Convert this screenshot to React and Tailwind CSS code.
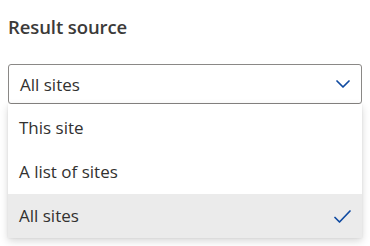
import React from 'react';

const options = ['This site', 'A list of sites', 'All sites'];

const Chevron = () => (
    <svg width="14" height="8" viewBox="0 0 14 8" fill="none">
        <path d="M1 1l6 6 6-6" stroke="#0f4aa1" strokeWidth="1.7" strokeLinecap="round" strokeLinejoin="round" />
    </svg>
);

const Check = () => (
    <svg width="17" height="13" viewBox="0 0 17 13" fill="none">
        <path d="M1 7.5l4.5 4.5L16 1" stroke="#0f4aa1" strokeWidth="1.7" strokeLinecap="round" strokeLinejoin="round" />
    </svg>
);

const App = () => {
    const selected = 'All sites';

    return (
        <div className="w-[370px] h-[246px] bg-white overflow-hidden text-[#323130]" style={{ fontFamily: '"Open Sans", "Noto Sans", sans-serif' }}>
            <div className="px-2 pt-[13px]">
                <h2 className="text-[18.5px] font-semibold leading-[27px] tracking-[-0.1px] text-[#3b3a39]">Result source</h2>

                <div className="mt-[24px] w-[354px] h-[40px] border border-[#8a8886] rounded-[3px] flex items-center justify-between pl-[11px] pr-[11px]">
                    <span className="text-[17px] leading-none">{selected}</span>
                    <Chevron />
                </div>

                <div className="w-[354px] pt-[2px] bg-white shadow-[0_3px_8px_rgba(0,0,0,0.16),0_0_2px_rgba(0,0,0,0.08)]">
                    {options.map((opt) => (
                        <div
                            key={opt}
                            className={`h-[44px] flex items-center justify-between pl-[11px] pr-[11px] text-[17px] ${opt === selected ? 'bg-[#ebebeb]' : ''}`}
                        >
                            <span>{opt}</span>
                            {opt === selected && <Check />}
                        </div>
                    ))}
                </div>
            </div>
        </div>
    );
};

export default App;
